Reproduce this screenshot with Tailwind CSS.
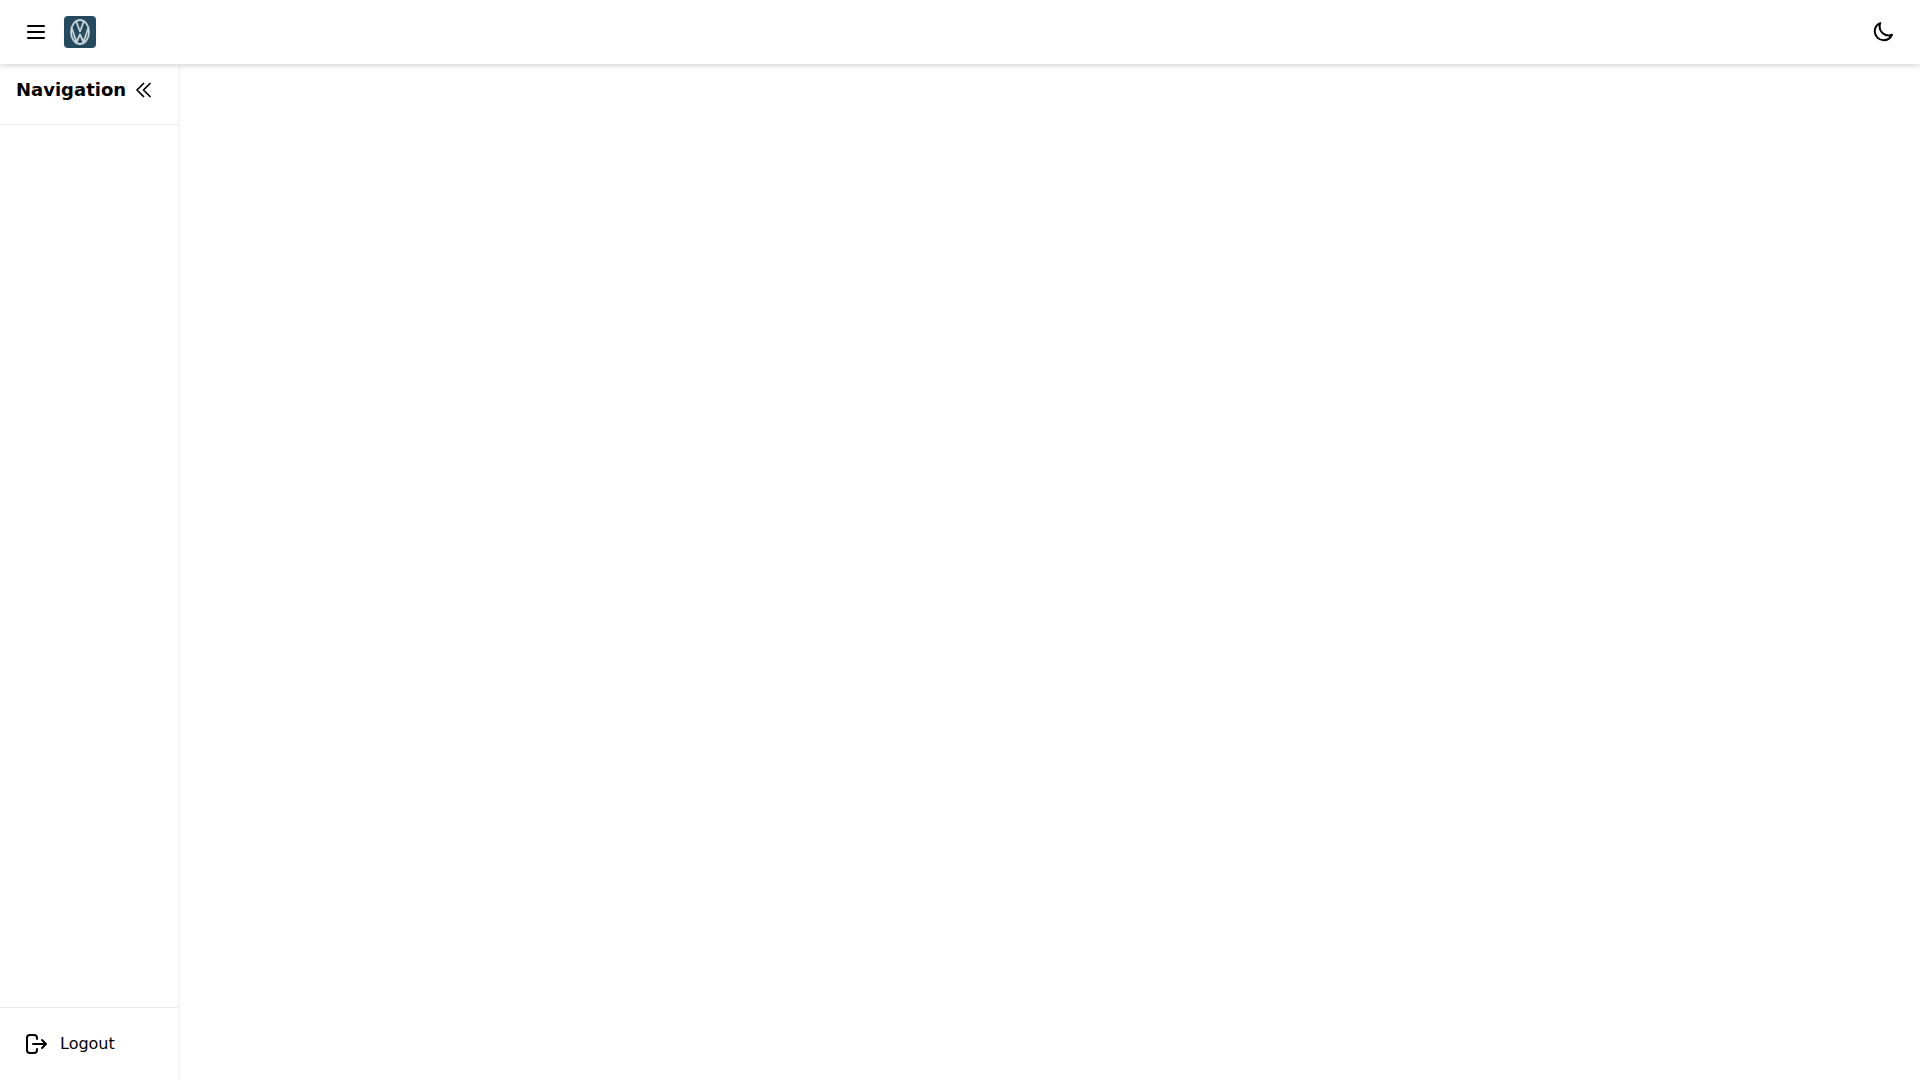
<!DOCTYPE html>
<html lang="en">
<head>
  <meta charset="UTF-8">
  <meta name="viewport" content="width=device-width, initial-scale=1.0">
  <title>Dashboard</title>
  <script src="https://cdn.jsdelivr.net/npm/@tailwindcss/browser@4"></script>
</head>
<body class="bg-white text-black font-['DejaVu_Sans',sans-serif] h-screen overflow-hidden flex flex-col">
  <!-- Header -->
  <header class="relative z-20 h-16 shrink-0 bg-white flex items-center justify-between pl-6 pr-[26px] shadow-[0_2px_5px_rgba(0,0,0,0.16)]">
    <div class="flex items-center gap-4">
      <svg class="w-6 h-6" viewBox="0 0 24 24" fill="none" stroke="currentColor" stroke-width="2" stroke-linecap="round">
        <path d="M4 6h16M4 12h16M4 18h16" />
      </svg>
      <div class="w-8 h-8 rounded-[4px] bg-[#234a5e] flex items-center justify-center">
        <svg class="w-[22px] h-[28px]" viewBox="0 0 22 28" fill="none" stroke="#c9d2d6" stroke-width="1.8" stroke-linejoin="round">
          <ellipse cx="11" cy="14" rx="9" ry="12" />
          <path d="M7 3 L11 13.5 L15 3" />
          <path d="M2.5 9.5 L7.5 24 L11 16.5 L14.5 24 L19.5 9.5" />
        </svg>
      </div>
    </div>
    <svg class="w-[22px] h-[22px]" viewBox="0 0 24 24" fill="none" stroke="currentColor" stroke-width="2.2" stroke-linecap="round" stroke-linejoin="round">
      <path d="M21.752 15.002A9.72 9.72 0 0 1 18 15.75c-5.385 0-9.75-4.365-9.75-9.75 0-1.33.266-2.597.748-3.752A9.753 9.753 0 0 0 3 11.25C3 16.635 7.365 21 12.75 21a9.753 9.753 0 0 0 9.002-5.998Z" />
    </svg>
  </header>

  <div class="flex-1 flex min-h-0">
    <!-- Sidebar -->
    <aside class="relative z-10 w-[178px] shrink-0 bg-white flex flex-col shadow-[1px_0_4px_rgba(0,0,0,0.07)]">
      <div class="h-[61px] shrink-0 border-b border-gray-200 flex items-start pl-4 pt-3 gap-[6px]">
        <h2 class="text-lg font-bold leading-7">Navigation</h2>
        <svg class="w-6 h-6 mt-[2px]" viewBox="0 0 24 24" fill="none" stroke="currentColor" stroke-width="1.75" stroke-linecap="round" stroke-linejoin="round">
          <path d="m11.5 5.5-6.5 6.5 6.5 6.5m6.5-13-6.5 6.5 6.5 6.5" />
        </svg>
      </div>
      <nav class="flex-1"></nav>
      <div class="h-[73px] shrink-0 border-t border-gray-200 flex items-center pl-6 gap-3">
        <svg class="w-6 h-6" viewBox="0 0 24 24" fill="none" stroke="currentColor" stroke-width="2" stroke-linecap="round" stroke-linejoin="round">
          <path d="M13 7V6a3 3 0 0 0-3-3H6a3 3 0 0 0-3 3v12a3 3 0 0 0 3 3h4a3 3 0 0 0 3-3v-1" />
          <path d="M9 12h13M18 8l4 4-4 4" />
        </svg>
        <span class="text-base">Logout</span>
      </div>
    </aside>
    <main class="flex-1 bg-white"></main>
  </div>
</body>
</html>
